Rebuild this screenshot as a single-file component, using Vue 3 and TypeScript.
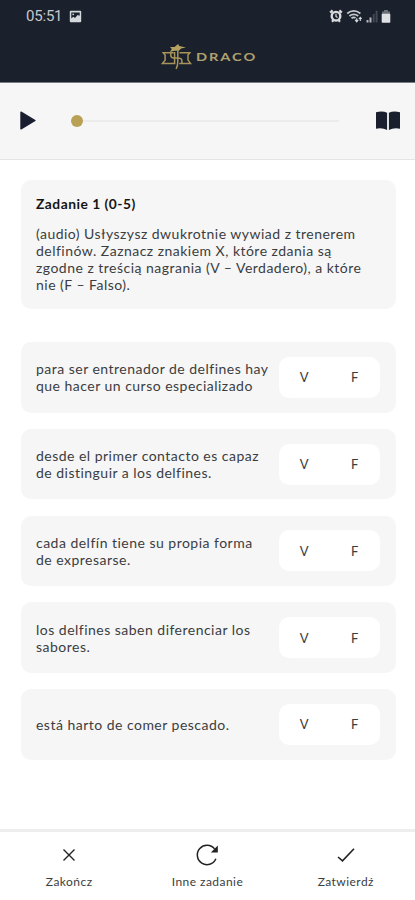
<script setup lang="ts">
import { ref } from 'vue'

interface Statement {
  lines: string[]
  answer: 'V' | 'F' | null
}

const intro: string[] = [
  '(audio) Usłyszysz dwukrotnie wywiad z trenerem',
  'delfinów. Zaznacz znakiem X, które zdania są',
  'zgodne z treścią nagrania (V – Verdadero), a które',
  'nie (F – Falso).',
]

const statements = ref<Statement[]>([
  { lines: ['para ser entrenador de delfines hay', 'que hacer un curso especializado'], answer: null },
  { lines: ['desde el primer contacto es capaz', 'de distinguir a los delfines.'], answer: null },
  { lines: ['cada delfín tiene su propia forma', 'de expresarse.'], answer: null },
  { lines: ['los delfines saben diferenciar los', 'sabores.'], answer: null },
  { lines: ['está harto de comer pescado.'], answer: null },
])
</script>

<template>
  <div class="screen">
    <header class="top">
      <div class="status">
        <span class="time">05:51</span>
        <svg class="picture" width="13" height="13" viewBox="0 0 13 13">
          <rect x="0.8" y="0.8" width="11.4" height="11.4" rx="1" fill="#d5d8db" />
          <path d="M2.3 2.4h8.4v3.4L8.6 4.9 6 8 4.2 6.8 2.3 8.4z" fill="#1a202c" />
          <circle cx="4.2" cy="4.3" r="0.9" fill="#d5d8db" />
        </svg>
        <div class="indicators">
          <svg width="14" height="14" viewBox="0 0 14 14">
            <path d="M1.2 3.6 3.6 1.4M12.8 3.6 10.4 1.4M3 12.7l1.3-1.5M11 12.7l-1.3-1.5" stroke="#d9dbde" stroke-width="2.2" />
            <circle cx="7" cy="7.2" r="4.3" fill="#1a202c" stroke="#d9dbde" stroke-width="2.4" />
            <path d="M7 4.8v2.7l1.5 1" fill="none" stroke="#d9dbde" stroke-width="1.2" />
          </svg>
          <svg width="17" height="14" viewBox="0 0 17 14">
            <path d="M1.2 4.5Q7.8-.8 14.4 4.5M3.4 7Q7.8 3.6 12.2 7M5.5 9.3Q7.8 7.6 9.5 9" fill="none" stroke="#c3c6ca" stroke-width="1.8" />
            <path d="M10.7 13V9.2M9.2 10.8l1.5 2 1.5-2M14.3 8.5V12M12.9 10l1.4-1.7L15.7 10" fill="none" stroke="#d9dbde" stroke-width="1.1" />
          </svg>
          <svg width="12" height="13" viewBox="0 0 12 13">
            <path d="M.5 10h2v2.5h-2zM3.5 7.5h2v5h-2z" fill="#b5b8bd" />
            <path d="M6.7 4h2v8.5h-2zM9.6.7h2v11.8h-2z" fill="#434954" />
          </svg>
          <svg width="10" height="13" viewBox="0 0 10 13">
            <path d="M3 0h4v1.4h2V4H1V1.4h2z" fill="#6c7079" />
            <rect x="0.7" y="3.8" width="8.6" height="9" rx="0.7" fill="#dfe0e3" />
          </svg>
        </div>
      </div>
      <div class="brand">
        <svg width="31" height="28" viewBox="0 0 31 28">
          <g fill="none" stroke="#a8945a" stroke-width="1.5">
            <path d="M12.6 9.8H2.2l1.9 2.3v5.1L1.4 20.4h12.2V9" />
            <path d="M18.5 9.8H28.8L27 12.1v5l2.5 3.3H18.2" />
            <path d="M16.8 7.6v10.6q0 4.5-1.7 7.8M9.8 9.8v2.7q0 2.4 3 2.5h4.2q3.9 0 3.9 2.9v2.5" />
          </g>
          <path d="M9 4.1 13.5 3.9 17.2.9 18.2 3l6.7 1.4-4.8 1-2.2 2.4-4.4-.1L8.8 8.9l2-3z" fill="#b5a160" />
        </svg>
        <span class="wordmark">DRACO</span>
      </div>
    </header>

    <section class="player">
      <svg class="play" width="16" height="19" viewBox="0 0 16 19">
        <path d="M1 1.2 15 9.5 1 17.8z" fill="#1a1f30" stroke="#1a1f30" stroke-width="1.4" stroke-linejoin="round" />
      </svg>
      <div class="track"><span class="thumb"></span></div>
      <svg class="book" width="24" height="20" viewBox="0 0 24 20">
        <path d="M0 1.3Q6.5-.3 11.1 1.8v17.3Q6.5 16.5 0 17.7zM24 1.3Q17.5-.3 12.9 1.8v17.3Q17.5 16.5 24 17.7z" fill="#1a1f2d" />
      </svg>
    </section>

    <main class="content">
      <article class="intro">
        <h1>Zadanie 1 (0-5)</h1>
        <p><span v-for="line in intro" :key="line" class="line">{{ line }}</span></p>
      </article>
      <div class="statements">
        <article v-for="(item, i) in statements" :key="i" class="statement">
          <p><span v-for="line in item.lines" :key="line" class="line">{{ line }}</span></p>
          <div class="choices">
            <button :class="{ chosen: item.answer === 'V' }" @click="item.answer = 'V'">V</button>
            <button :class="{ chosen: item.answer === 'F' }" @click="item.answer = 'F'">F</button>
          </div>
        </article>
      </div>
    </main>

    <nav class="actions">
      <button>
        <svg width="24" height="24" viewBox="0 0 24 24">
          <path d="M6.5 6.5 17.5 17.5M17.5 6.5 6.5 17.5" fill="none" stroke="#222" stroke-width="1.4" />
        </svg>
        <span>Zakończ</span>
      </button>
      <button>
        <svg width="24" height="24" viewBox="0 0 24 24">
          <path d="M20.9 15.8A9.7 9.7 0 1 1 19.6 5.9" fill="none" stroke="#222" stroke-width="1.5" />
          <path d="M22.8 2.6V9.4H15.8z" fill="#222" />
        </svg>
        <span>Inne zadanie</span>
      </button>
      <button>
        <svg width="24" height="24" viewBox="0 0 24 24">
          <path d="M4 14 8.5 17.8 20 5.8" fill="none" stroke="#222" stroke-width="1.6" />
        </svg>
        <span>Zatwierdź</span>
      </button>
    </nav>
  </div>
</template>

<style>
body {
  margin: 0;
  background: #fff;
}
</style>

<style scoped>
.screen {
  width: 415px;
  height: 900px;
  display: flex;
  flex-direction: column;
  overflow: hidden;
  background: #fff;
  color: #3b3d41;
  font-family: Lato, "Liberation Sans", sans-serif;
}
.top {
  height: 83px;
  flex: none;
  background: #1a202c;
  border-bottom: 1px solid #777b82;
  box-sizing: border-box;
}
.status {
  height: 32px;
  display: flex;
  align-items: center;
  padding: 0 23px 0 26px;
}
.time {
  color: #c6c9cd;
  font: 15px/20px Roboto, sans-serif;
  letter-spacing: -0.2px;
  width: 43px;
}
.indicators {
  margin-left: auto;
  display: flex;
  align-items: center;
  gap: 3px;
  margin-right: 1px;
}
.brand {
  display: flex;
  align-items: center;
  padding: 10px 0 0 161px;
}
.wordmark {
  color: #b0a070;
  font-size: 11.5px;
  font-weight: 700;
  line-height: 28px;
  letter-spacing: 1.5px;
  margin-left: 4px;
  padding-top: 1px;
  transform: scaleX(1.27);
  transform-origin: left center;
}
.player {
  height: 77px;
  flex: none;
  box-sizing: border-box;
  background: #f6f6f6;
  border-bottom: 1px solid #e4e4e4;
  display: flex;
  align-items: center;
  padding: 0 15px 1px 20px;
}
.track {
  width: 268px;
  height: 2px;
  background: #ececec;
  margin-left: 35px;
  display: flex;
  align-items: center;
}
.thumb {
  flex: none;
  width: 12px;
  height: 12px;
  border-radius: 50%;
  background: #b8a055;
}
.book {
  margin-left: auto;
}
.content {
  flex: 1;
  padding: 20px 19px 0 21px;
}
.intro {
  height: 129px;
  box-sizing: border-box;
  padding: 15px 15px 0;
  border-radius: 10px;
  background: #f6f6f6;
}
h1 {
  margin: 0 0 13px;
  color: #151515;
  font-size: 13.8px;
  line-height: 17px;
  font-weight: 700;
  letter-spacing: 0.5px;
}
p {
  margin: 0;
  font-size: 14px;
  line-height: 17px;
  letter-spacing: 0.48px;
}
.line {
  display: block;
  white-space: nowrap;
}
.statements {
  display: flex;
  flex-direction: column;
  gap: 16.3px;
  padding-top: 33px;
}
.statement {
  height: 70.5px;
  box-sizing: border-box;
  display: flex;
  align-items: center;
  justify-content: space-between;
  padding: 0 16px 0 15px;
  border-radius: 10px;
  background: #f6f6f6;
}
.choices {
  width: 101px;
  height: 41px;
  display: grid;
  grid-template-columns: 1fr 1fr;
  border-radius: 10px;
  background: #fff;
}
button {
  border: 0;
  padding: 0;
  background: none;
  color: inherit;
  font: inherit;
}
.choices button {
  font-size: 13px;
}
.choices .chosen {
  color: #b8a055;
  font-weight: 700;
}
.actions {
  height: 71px;
  flex: none;
  box-sizing: border-box;
  border-top: 3px solid #eee;
  display: grid;
  grid-template-columns: repeat(3, 1fr);
  background: #fff;
}
.actions button {
  display: flex;
  flex-direction: column;
  align-items: center;
  padding-top: 11px;
  font-size: 12px;
  line-height: 16px;
  letter-spacing: 0.45px;
  gap: 7px;
}
</style>
